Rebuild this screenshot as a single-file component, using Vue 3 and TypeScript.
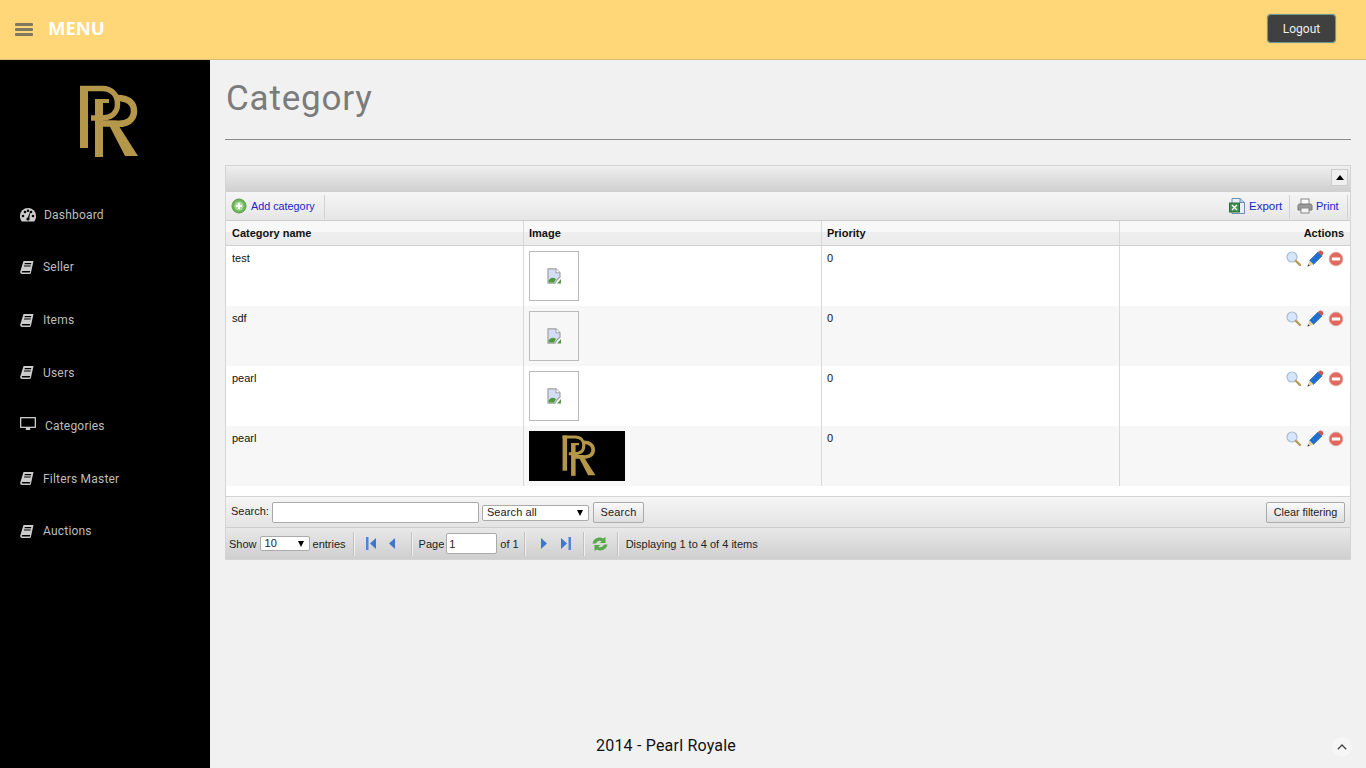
<script setup lang="ts">
const navItems = [
  { label: 'Dashboard', icon: 'gauge' },
  { label: 'Seller', icon: 'book' },
  { label: 'Items', icon: 'book' },
  { label: 'Users', icon: 'book' },
  { label: 'Categories', icon: 'monitor' },
  { label: 'Filters Master', icon: 'book' },
  { label: 'Auctions', icon: 'book' },
]
const rows = [
  { name: 'test', logo: false },
  { name: 'sdf', logo: false },
  { name: 'pearl', logo: false },
  { name: 'pearl', logo: true },
]
</script>

<template>
  <div class="page">
    <header class="topbar">
      <div class="burger"><i></i><i></i><i></i></div>
      <span class="menu-label">MENU</span>
      <button class="logout">Logout</button>
    </header>
    <div class="body-row">
      <aside class="sidebar">
        <div class="logo-wrap">
          <svg class="logo" viewBox="0 0 60 74">
            <g fill="none" stroke="#b5974a">
              <path stroke-width="8" d="M5 63V1" />
              <path stroke-width="5.500" d="M1 3.500H23C34 3.500 38.500 11 38.500 19C38.500 29 31 33 22 33H12" />
              <path stroke-width="8" d="M20 72V14" />
              <path stroke-width="4" d="M16 16H30" />
              <path stroke-width="6.500" d="M36 13C49 12 55 18 55 26C55 35 48 40 36 38.500H22" />
            </g>
            <path fill="#b5974a" d="M29 38H38L59 71H46z" />
          </svg>
        </div>
        <nav class="nav">
          <a v-for="item in navItems" :key="item.label" class="nav-item">
            <svg v-if="item.icon === 'gauge'" class="nav-icon gauge" viewBox="0 0 16 14">
              <path fill="#ccc" d="M8 0a8 8 0 0 0-8 8c0 2 .6 4 1.800 5.500h12.400C15.400 12 16 10 16 8a8 8 0 0 0-8-8z" />
              <circle cx="3" cy="8" r="1.300" /><circle cx="5" cy="4" r="1.300" /><circle cx="8" cy="2.800" r="1.200" /><circle cx="13" cy="8" r="1.300" /><circle cx="11" cy="4" r="1.300" />
              <path d="M7 11.500L9.800 4.500 10.200 4.800 9 11.800z" /><circle cx="8" cy="11" r="1.600" />
            </svg>
            <svg v-else-if="item.icon === 'book'" class="nav-icon book" viewBox="0 0 14 13">
              <path fill="#ccc" d="M3.500 0H13.500L11 11.500C10.800 12.500 10 13 9 13H2C.8 13 0 12 .2 10.800z" />
              <path fill="#000" d="M4.800 2H11.300L11 3.200H4.500zM4.200 4.400H10.800L10.500 5.600H3.900zM2.500 10H10.200L9.800 11.500H2.400C1.600 11.500 1.600 10 2.500 10z" />
            </svg>
            <svg v-else class="nav-icon monitor" viewBox="0 0 16 14">
              <path fill="#ccc" d="M1 0H15C15.600 0 16 .4 16 1V10C16 10.600 15.600 11 15 11H1C.4 11 0 10.600 0 10V1C0 .4 .4 0 1 0z" />
              <path fill="#000" d="M1.300 1.300H14.700V9.700H1.300z" />
              <path fill="#ccc" d="M6 11H10L10.300 13H5.700z" />
            </svg>
            <span class="nav-text">{{ item.label }}</span>
          </a>
        </nav>
      </aside>

      <main class="main">
        <h1 class="title">Category</h1>
        <div class="rule"></div>

        <section class="grid">
          <div class="grid-title"><span class="collapse"><i></i></span></div>
          <div class="toolbar">
            <a class="tool tool-add">
              <svg class="ico" viewBox="0 0 16 16">
                <circle cx="8" cy="8" r="7" fill="#6fb85a" stroke="#5d9a4d" />
                <circle cx="8" cy="8" r="4.500" fill="#a8d99a" />
                <path d="M8 5v6M5 8h6" stroke="#fff" stroke-width="2" />
              </svg>
              <span>Add category</span>
            </a>
            <span class="spacer"></span>
            <a class="tool tool-export">
              <svg class="ico" viewBox="0 0 16 16">
                <path d="M3 .500H11L15.500 4.500V15.500H3z" fill="#e6eef6" stroke="#6a8fb0" />
                <path d="M11 .500V4.500H15.500" fill="#bcd0e4" stroke="#6a8fb0" />
                <rect x=".500" y="5" width="10" height="9" fill="#3f8f4f" stroke="#2c6c3a" />
                <path d="M3 7l5 5M8 7l-5 5" stroke="#fff" stroke-width="1.300" />
              </svg>
              <span>Export</span>
            </a>
            <a class="tool tool-print">
              <svg class="ico" viewBox="0 0 16 16">
                <rect x="4" y="1" width="8" height="6" fill="#fff" stroke="#888" />
                <path d="M1 7.500Q1 6 3 6H13Q15 6 15 7.500V12H1z" fill="#9a9a9a" stroke="#777" />
                <rect x="4" y="10" width="8" height="5" fill="#f4f4f4" stroke="#888" />
              </svg>
              <span>Print</span>
            </a>
          </div>

          <div class="row head">
            <div class="cell">Category name</div>
            <div class="cell">Image</div>
            <div class="cell">Priority</div>
            <div class="cell right">Actions</div>
          </div>

          <div v-for="(r, i) in rows" :key="i" :class="['row', 'data', { alt: i % 2 === 1 }]">
            <div class="cell">{{ r.name }}</div>
            <div class="cell img-cell">
              <div v-if="r.logo" class="thumb-logo">
                <svg class="logo-mini" viewBox="0 0 60 74">
                  <g fill="none" stroke="#b5974a">
                    <path stroke-width="8" d="M5 63V1" />
                    <path stroke-width="5.500" d="M1 3.500H23C34 3.500 38.500 11 38.500 19C38.500 29 31 33 22 33H12" />
                    <path stroke-width="8" d="M20 72V14" />
                    <path stroke-width="4" d="M16 16H30" />
                    <path stroke-width="6.500" d="M36 13C49 12 55 18 55 26C55 35 48 40 36 38.500H22" />
                  </g>
                  <path fill="#b5974a" d="M29 38H38L59 71H46z" />
                </svg>
              </div>
              <div v-else class="thumb">
                <svg class="broken" viewBox="0 0 16 16">
                  <path d="M2 .800H10L14 4.800V9L11 12L9 15.200H2z" fill="#d3def6" stroke="#a0a0a0" stroke-width="1.200" />
                  <path d="M10 .800V4.800H14" fill="#fff" stroke="#a0a0a0" />
                  <path d="M2.600 12.500C4.500 9 7.500 9 10 11L8 14.600H2.600z" fill="#4f9a3c" />
                  <path d="M15 11V15.500H11z" fill="#4f9a3c" />
                </svg>
              </div>
            </div>
            <div class="cell">0</div>
            <div class="cell actions">
              <svg class="act" viewBox="0 0 16 16">
                <circle cx="6" cy="6" r="5" fill="#d6e7fa" stroke="#a9bdd3" stroke-width="1.200" />
                <path d="M10 10L14 14" stroke="#b89a55" stroke-width="2.400" stroke-linecap="round" />
              </svg>
              <svg class="act pencil" viewBox="0 0 18 18">
                <path d="M3.500 10.500L12 2 16 6 7.500 14.500z" fill="#1f6fd0" stroke="#14508f" stroke-width=".5" />
                <path d="M12 2L13.500 .8C14.400.2 15.300.3 16.300 1.300 17.400 2.400 17.600 3.400 17 4.300L16 6z" fill="#d9534f" />
                <path d="M3.500 10.500L7.500 14.500 1.500 16.500z" fill="#eccf94" />
                <path d="M2.300 14.200L1.500 16.500 3.800 15.700z" fill="#333" />
              </svg>
              <svg class="act" viewBox="0 0 16 16">
                <circle cx="8" cy="8" r="6.800" fill="#e2685f" stroke="#dda89f" />
                <rect x="3.800" y="6.500" width="8.400" height="3" fill="#fff" />
              </svg>
            </div>
          </div>
          <div class="grid-gap"></div>

          <div class="searchbar">
            <span class="lbl lbl-search">Search:</span>
            <input class="search-input" type="text" />
            <span class="sel sel-search">Search all<i></i></span>
            <button class="btn btn-search">Search</button>
            <span class="spacer"></span>
            <button class="btn btn-clear">Clear filtering</button>
          </div>

          <div class="pager">
            <span class="lbl">Show</span>
            <span class="sel sel-page">10<i></i></span>
            <span class="lbl">entries</span>
            <b class="sep s1"></b>
            <svg class="pg pg-first" viewBox="0 0 11 13"><path d="M0 0H2.500V13H0z" fill="#4e86d4" /><path d="M10 1V12L4 6.500z" fill="#3f77cc" /></svg>
            <svg class="pg pg-prev" viewBox="0 0 8 13"><path d="M7 1V12L1 6.500z" fill="#3f77cc" /></svg>
            <b class="sep s2"></b>
            <span class="lbl">Page</span>
            <input class="page-input" type="text" value="1" />
            <span class="lbl">of 1</span>
            <b class="sep s3"></b>
            <svg class="pg pg-next" viewBox="0 0 8 13"><path d="M1 1V12L7 6.500z" fill="#3f77cc" /></svg>
            <svg class="pg pg-last" viewBox="0 0 11 13"><path d="M8.500 0H11V13H8.500z" fill="#4e86d4" /><path d="M1 1V12L7 6.500z" fill="#3f77cc" /></svg>
            <b class="sep s4"></b>
            <svg class="pg pg-refresh" viewBox="0 0 16 14">
              <path d="M.500 6.500C1.500 1.500 7 -1 11 1.500L13.500 0V6H7.500L9.800 4.300C7.500 3 5 4 4 6.500z" fill="#58a84a" />
              <path d="M15.500 7.500C14.500 12.500 9 15 5 12.500L2.500 14V8H8.500L6.200 9.700C8.500 11 11 10 12 7.500z" fill="#58a84a" />
            </svg>
            <b class="sep s5"></b>
            <span class="lbl">Displaying 1 to 4 of 4 items</span>
          </div>
        </section>

        <footer class="footer">2014 - Pearl Royale</footer>
        <button class="to-top" aria-label="Back to top">
          <svg viewBox="0 0 10 6"><path d="M.800 5.200L5 1 9.200 5.200" fill="none" stroke="#444" stroke-width="1.300" /></svg>
        </button>
      </main>
    </div>
  </div>
</template>

<style>
html, body { margin: 0; height: 100%; overflow: hidden; }
</style>

<style scoped>
* { box-sizing: border-box; }
.page { width: 1366px; height: 768px; display: flex; flex-direction: column; font-family: "Liberation Sans", Arial, sans-serif; background: #f1f1f1; overflow: hidden; }
.topbar { height: 60px; flex: none; background: #ffd678; border-bottom: 1px solid #d9bc74; display: flex; align-items: center; padding: 0 30px 2px 15px; }
.burger { width: 18px; display: flex; flex-direction: column; gap: 1.500px; margin-top: 2px; }
.burger i { display: block; height: 3.500px; background: #7f7962; border-radius: 1px; }
.menu-label { margin-left: 15px; color: #fff; font: 700 18.500px "Open Sans", sans-serif; line-height: 24px; margin-top: -2px; }
.logout { margin-left: auto; width: 69px; height: 29px; background: #404040; border: 1px solid #6d9a8c; border-radius: 4px; color: #eee; font: 400 12px Roboto, sans-serif; padding: 0; box-shadow: 0 0 1px #6d9a8c; }
.body-row { flex: 1; display: flex; min-height: 0; }
.sidebar { width: 210px; flex: none; background: #000; }
.logo-wrap { height: 128.200px; padding: 25px 0 0 79px; }
.logo { width: 60px; height: 74px; display: block; }
.nav { display: flex; flex-direction: column; }
.nav-item { height: 52.800px; display: flex; align-items: center; padding-left: 20px; }
.nav-icon { flex: none; display: block; }
.gauge { width: 16px; height: 14px; margin-right: 8px; }
.book { width: 14px; height: 13px; margin-right: 9px; }
.monitor { width: 16px; height: 14px; margin-right: 9px; margin-top: -3px; }
.nav-text { color: #bdbdbd; font: 400 12px Roboto, sans-serif; letter-spacing: .2px; }
.main { flex: 1; min-width: 0; padding: 0 15px; display: flex; flex-direction: column; position: relative; }
.title { margin: 16px 0 0 1px; height: 45px; font: 400 35px/45px Roboto, sans-serif; color: #7b7b7b; letter-spacing: .8px; }
.rule { height: 1px; background: #8a8a8a; margin-top: 18px; }
.grid { margin-top: 25px; width: 1126px; height: 395px; border: 1px solid #d4d4d4; font-size: 11px; color: #111; background: #fff; display: flex; flex-direction: column; }
.grid-title { height: 27px; flex: none; background: linear-gradient(#efefef, #cfcfcf); border-bottom: 1px solid #f4f4f4; display: flex; justify-content: flex-end; padding: 3px 2px 0 0; }
.collapse { width: 17px; height: 17px; background: #efefef; border: 1px solid #ccc; display: flex; align-items: center; justify-content: center; }
.collapse i { border-left: 4px solid transparent; border-right: 4px solid transparent; border-bottom: 5px solid #000; }
.toolbar { height: 28px; flex: none; background: linear-gradient(#f5f5f5, #e6e6e6); border-bottom: 1px solid #ccc; display: flex; align-items: center; padding-right: 2px; }
.tool { height: 24px; padding-bottom: 2px; display: flex; align-items: center; color: #2323c8; border-right: 1px solid #d2d2d2; }
.tool-add { width: 99px; padding-left: 5px; gap: 4px; font-size: 10.800px; }
.tool-export { width: 64px; padding-left: 3px; gap: 4px; font-size: 11.500px; }
.tool-print { width: 58px; padding-left: 7px; gap: 3px; }
.ico { width: 16px; height: 16px; flex: none; }
.spacer { flex: 1; }
.row { display: grid; grid-template-columns: 298px 298px 298px 1fr; }
.head { height: 25px; flex: none; font-weight: 700; background: linear-gradient(#f8f8f8 0, #f8f8f8 44%, #eeeeee 44%, #ececec 100%); border-bottom: 1px solid #d0d0d0; }
.head .cell { padding: 6px 5px 0 6px; line-height: 13px; border-right: 1px solid #d8d8d8; }
.head .cell:nth-child(2), .data .cell:nth-child(2) { padding-left: 5px; }
.head .cell:nth-child(3), .data .cell:nth-child(3) { padding-left: 5px; }
.head .cell:last-child { border-right: 0; padding-right: 6px; }
.data { height: 60px; flex: none; background: #fff; }
.data.alt { background: #f7f7f7; }
.data .cell { padding: 6px 6px 0; line-height: 13px; border-right: 1px solid #d8d8d8; }
.data .cell:last-child { border-right: 0; }
.right { text-align: right; }
.data .img-cell { padding-top: 5px; }
.thumb { width: 50px; height: 50px; border: 1px solid #bbb; background: transparent; display: flex; align-items: center; justify-content: center; }
.broken { width: 16px; height: 16px; }
.thumb-logo { width: 96px; height: 50px; background: #000; display: flex; justify-content: center; align-items: center; padding-left: 3px; }
.logo-mini { width: 34px; height: 42px; display: block; }
.data .actions { display: flex; justify-content: flex-end; align-items: flex-start; padding: 5px 6px 0 0; gap: 5px; }
.act { width: 16px; height: 16px; flex: none; }
.act.pencil { width: 18px; height: 18px; margin-top: -1px; margin-right: -1px; margin-left: -1px; }
.grid-gap { height: 10px; flex: none; background: #fff; }
.searchbar { height: 32px; flex: none; border-top: 1px solid #d4d4d4; border-bottom: 1px solid #ccc; background: linear-gradient(#f5f5f5, #e4e4e4); display: flex; align-items: center; padding: 0 5px; color: #222; }
.lbl { white-space: nowrap; color: #222; }
.lbl-search { margin-bottom: 2px; }
.search-input { width: 207px; height: 21px; margin-left: 3px; border: 1px solid #aaa; background: #fff; border-radius: 2px; padding: 0; }
.sel { position: relative; display: block; background: #fff; border: 1px solid #aaa; border-radius: 2px; color: #222; line-height: 13px; padding-left: 4px; font-size: 11px; }
.sel i { position: absolute; right: 5px; top: 4px; border-left: 3.500px solid transparent; border-right: 3.500px solid transparent; border-top: 6px solid #000; }
.sel-search { width: 107px; height: 16px; margin-left: 3px; margin-top: 1px; letter-spacing: .1px; }
.btn { height: 21px; background: linear-gradient(#fafafa, #dedede); border: 1px solid #aaa; border-radius: 2px; color: #222; font: 11px "Liberation Sans", Arial, sans-serif; padding: 0; }
.btn-search { width: 51px; margin-left: 4px; letter-spacing: .2px; }
.btn-clear { width: 79px; font-size: 10.800px; }
.pager { flex: 1; background: linear-gradient(#e8e8e8, #cfcfcf); display: flex; align-items: center; padding-left: 3px; }
.sel-page { width: 50px; height: 15px; margin: 0 3px; }
.sep { display: block; height: 24px; background: #c0c0c0; border-right: 1px solid #f0f0f0; width: 2px; flex: none; }
.s1 { margin-left: 7px; margin-right: 11px; }
.pg { flex: none; display: block; }
.pg-first { width: 11px; height: 13px; margin-right: 11px; }
.pg-prev { width: 8px; height: 13px; margin-right: 15px; }
.s2 { margin-right: 6px; }
.page-input { width: 51px; height: 21px; margin: 0 3px 0 2px; border: 1px solid #aaa; background: #fff; border-radius: 2px; padding: 0 2px; font: 11px "Liberation Sans", Arial, sans-serif; color: #222; }
.s3 { margin-left: 5px; margin-right: 14px; }
.pg-next { width: 8px; height: 13px; margin-right: 12px; }
.pg-last { width: 11px; height: 13px; margin-right: 12px; }
.s4 { margin-right: 7px; }
.pg-refresh { width: 16px; height: 14px; margin-right: 9px; }
.s5 { margin-right: 7px; }
.footer { position: absolute; left: 0; right: 244px; top: 676px; text-align: center; font: 400 16px Roboto, sans-serif; color: #111; letter-spacing: .2px; }
.to-top { position: absolute; right: 14px; top: 677px; width: 20px; height: 20px; border-radius: 50%; border: 0; background: #f6f6f6; padding: 0 5px; display: flex; align-items: center; justify-content: center; }
.to-top svg { width: 10px; height: 6px; display: block; }
</style>
